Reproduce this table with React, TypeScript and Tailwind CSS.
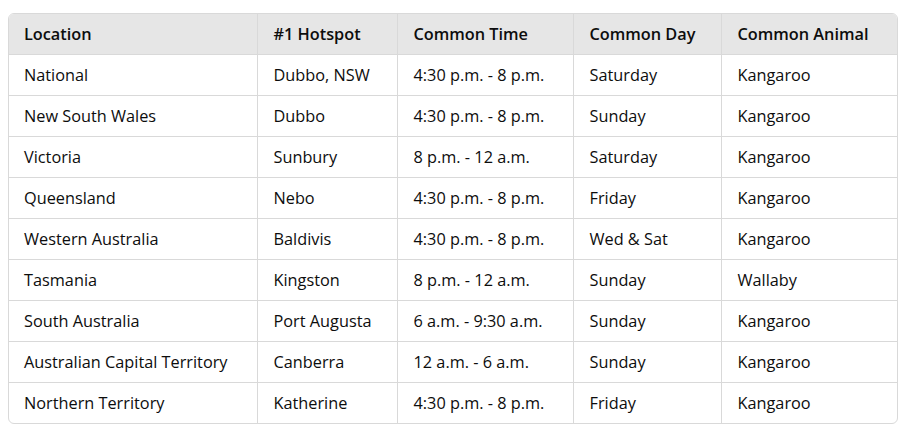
const columns = [
  { name: 'Location', width: 'w-[248px]' },
  { name: '#1 Hotspot', width: 'w-[140px]' },
  { name: 'Common Time', width: 'w-[176px]' },
  { name: 'Common Day', width: 'w-[148px]' },
  { name: 'Common Animal', width: 'w-[176px]' },
];

const rows = [
  ['National', 'Dubbo, NSW', '4:30 p.m. - 8 p.m.', 'Saturday', 'Kangaroo'],
  ['New South Wales', 'Dubbo', '4:30 p.m. - 8 p.m.', 'Sunday', 'Kangaroo'],
  ['Victoria', 'Sunbury', '8 p.m. - 12 a.m.', 'Saturday', 'Kangaroo'],
  ['Queensland', 'Nebo', '4:30 p.m. - 8 p.m.', 'Friday', 'Kangaroo'],
  ['Western Australia', 'Baldivis', '4:30 p.m. - 8 p.m.', 'Wed & Sat', 'Kangaroo'],
  ['Tasmania', 'Kingston', '8 p.m. - 12 a.m.', 'Sunday', 'Wallaby'],
  ['South Australia', 'Port Augusta', '6 a.m. - 9:30 a.m.', 'Sunday', 'Kangaroo'],
  ['Australian Capital Territory', 'Canberra', '12 a.m. - 6 a.m.', 'Sunday', 'Kangaroo'],
  ['Northern Territory', 'Katherine', '4:30 p.m. - 8 p.m.', 'Friday', 'Kangaroo'],
];

export default function App() {
  return (
    <div className="w-[911px] h-[438px] bg-white pl-[8px] pt-[13px] font-['Open_Sans',sans-serif] text-[#0d0d0d]">
      <div className="w-[890px] overflow-hidden rounded-[6px] border border-[#d9d9d9]">
        <table className="w-full table-fixed border-collapse text-[16.3px]">
          <thead>
            <tr className="h-[40px] bg-[#e6e6e6]">
              {columns.map((col, i) => (
                <th
                  key={col.name}
                  className={`${col.width} pr-[15px] text-left font-semibold ${i > 0 ? 'pl-[16px] border-l border-[#d9d9d9]' : 'pl-[15px]'}`}
                >
                  {col.name}
                </th>
              ))}
            </tr>
          </thead>
          <tbody>
            {rows.map((row) => (
              <tr key={row[0]} className="h-[41px] border-t border-[#d9d9d9]">
                {row.map((cell, i) => (
                  <td
                    key={i}
                    className={`pr-[15px] pt-[1px] ${i > 0 ? 'pl-[16px] border-l border-[#d9d9d9]' : 'pl-[15px]'}`}
                  >
                    {cell}
                  </td>
                ))}
              </tr>
            ))}
          </tbody>
        </table>
      </div>
    </div>
  );
}
